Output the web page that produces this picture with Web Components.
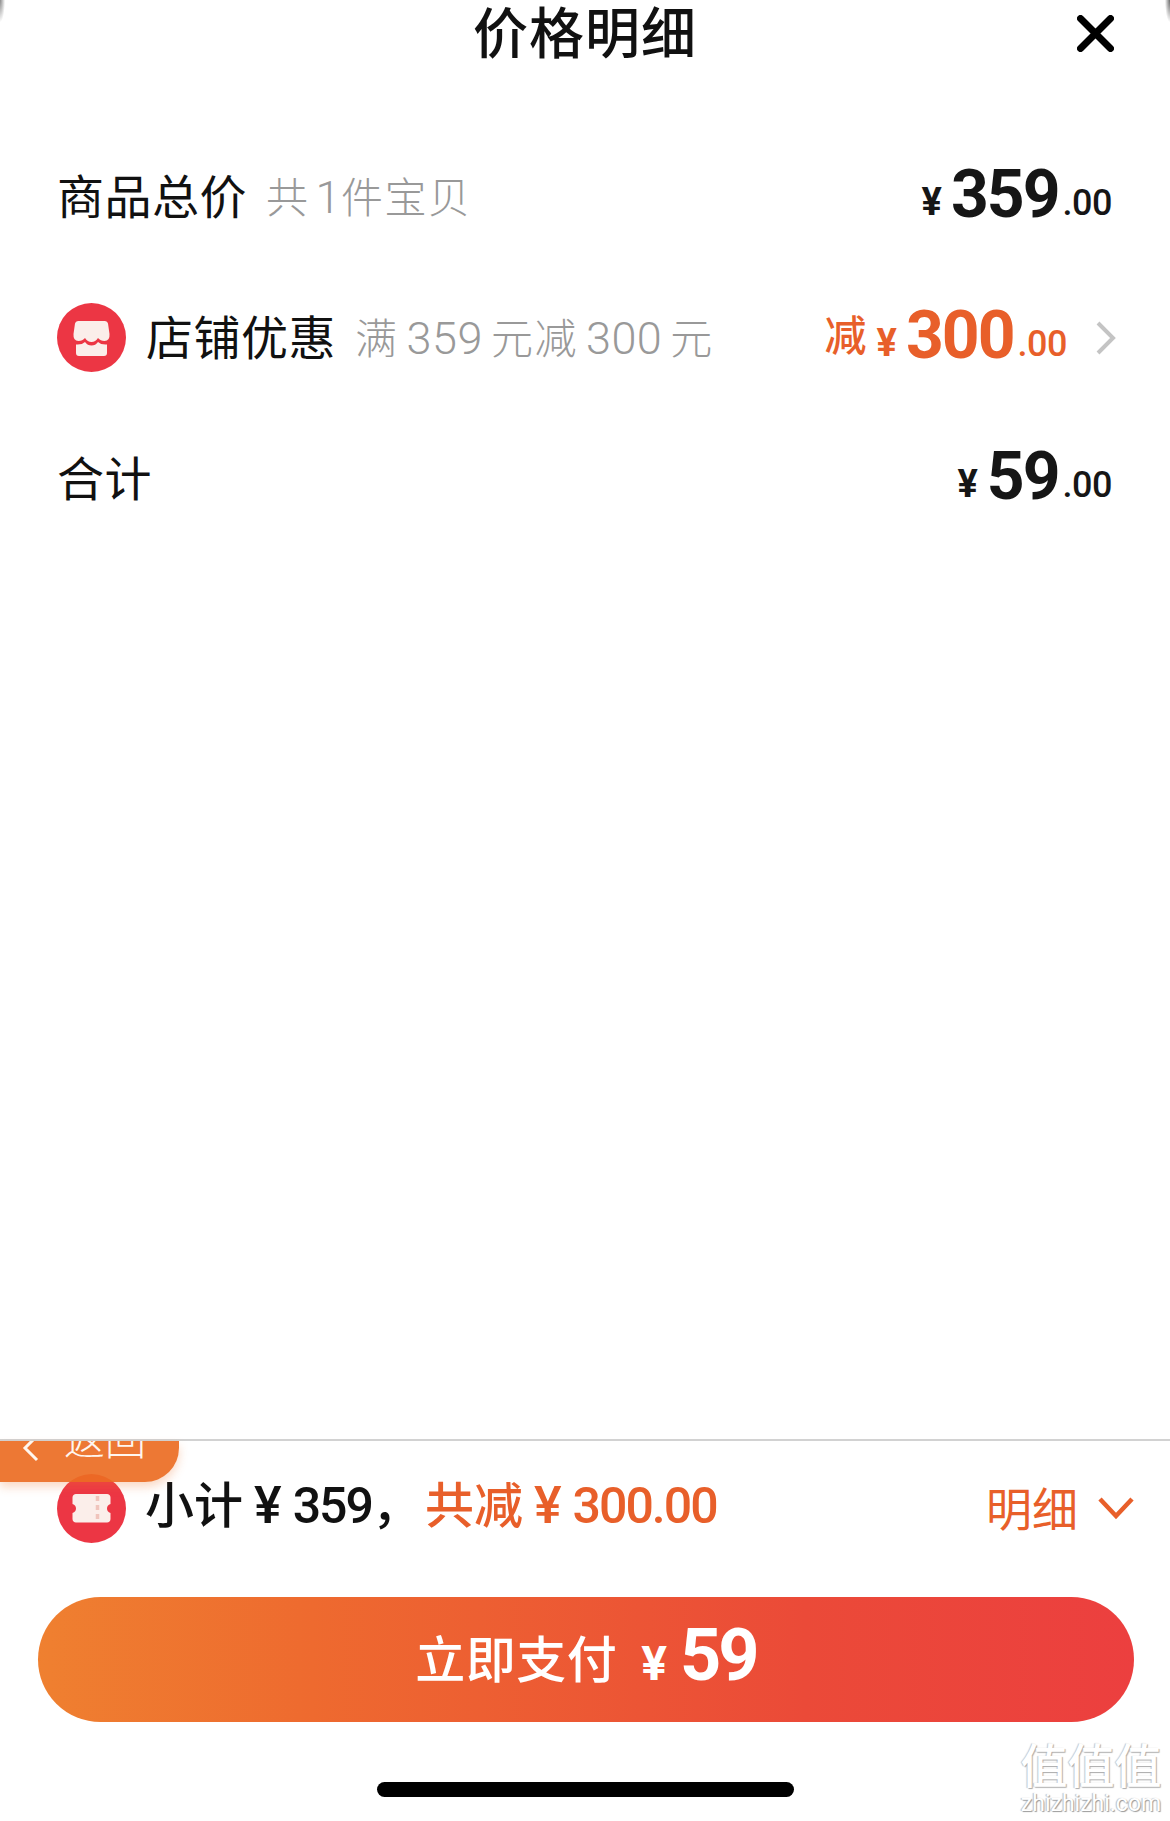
<!DOCTYPE html>
<html lang="zh"><head><meta charset="utf-8"><title>价格明细</title>
<style>
html,body{margin:0;padding:0;background:#fff}
body{width:1170px;height:1821px;overflow:hidden;font-family:"Noto Sans CJK SC","Noto Sans",sans-serif;color:#111}
</style></head><body>
<price-sheet>
  <sheet-header slot="header" title="价格明细"></sheet-header>
  <price-row slot="rows" label="商品总价" note="共 1 件宝贝">
    <price-amount whole="359"></price-amount>
  </price-row>
  <price-row slot="rows" label="店铺优惠" note="满 359 元减 300 元" icon="shop">
    <price-amount whole="300" prefix="减" tone="accent" chevron></price-amount>
  </price-row>
  <price-row slot="rows" label="合计">
    <price-amount whole="59"></price-amount>
  </price-row>
  <order-footer slot="footer"></order-footer>
</price-sheet>
<script>
const FONT_CJK='"Noto Sans CJK SC","Noto Sans",sans-serif';
const FONT_NUM='Roboto,"Noto Sans",sans-serif';
const ICONS={
 shop:`<svg viewBox="0 0 69 69" width="69" height="69"><circle cx="34.5" cy="34.5" r="34.5" fill="#EC3644"/><path fill="#fbeeea" d="M21 18H48Q50.5 18 51 20.500L52.500 31Q53 38 47.500 38Q43.500 38 41 35Q38.500 39 34.500 39Q30.500 39 28 35Q25.500 38 21.500 38Q16 38 16.500 31L18 20.500Q18.500 18 21 18Z"/><path fill="#fbeeea" d="M19 41.500Q25 42 28 39Q30.500 42.500 34.500 42.500Q38.500 42.500 41 39Q44 42 50 41.500V50Q50 53 47 53H22Q19 53 19 50Z"/></svg>`,
 ticket:`<svg viewBox="0 0 69 69" width="69" height="69"><circle cx="34.500" cy="34.500" r="34.500" fill="#EC3644"/><path fill="#fbeeea" d="M19 20h31c2 0 3.500 1.500 3.500 3.500v6.500c-2.400.8-3.500 2.400-3.500 4.500s1.100 3.700 3.500 4.500v6c0 2-1.500 3.500-3.500 3.500H19c-2 0-3.500-1.500-3.500-3.500v-6c2.400-.8 3.500-2.400 3.500-4.500s-1.100-3.700-3.500-4.500v-6.500c0-2 1.500-3.500 3.500-3.500z"/><path stroke="#f0c4bc" stroke-width="3.500" stroke-dasharray="5 4" d="M40.500 22v25"/></svg>`
};
function define(name,css,html){
  customElements.define(name,class extends HTMLElement{
    connectedCallback(){
      if(this.shadowRoot)return;
      const r=this.attachShadow({mode:'open'});
      r.innerHTML=`<style>${css}</style>`+(typeof html==='function'?html(this):html);
    }
  });
}
define('price-sheet',`
 :host{display:flex;flex-direction:column;position:relative;width:1170px;height:1821px;background:#fff;overflow:hidden}
 .rows{display:flex;flex-direction:column}
 .grow{flex:1}
`,`<slot name="header"></slot><div class="rows"><slot name="rows"></slot></div><div class="grow"></div><slot name="footer"></slot>`);

define('sheet-header',`
 :host{display:block;position:relative;height:126px;box-sizing:border-box;text-align:center}
 :host::before,:host::after{content:"";position:absolute;top:0;width:5px;height:22px}
 :host::before{left:0;background:radial-gradient(ellipse at 0 0,#8a8a8a,rgba(255,255,255,0) 72%)}
 :host::after{right:0;background:radial-gradient(ellipse at 100% 0,#6a6a6a,rgba(255,255,255,0) 72%)}
 h1{margin:0;font:500 55px/56px ${FONT_CJK};color:#111;letter-spacing:1px;padding-top:1px}
 svg{position:absolute;left:1077px;top:15px}
`,h=>`<h1>${h.getAttribute('title')}</h1>
 <svg width="37" height="37" viewBox="0 0 37 37"><path d="M3.500 3.500l30 30M33.500 3.500l-30 30" stroke="#000" stroke-width="7" stroke-linecap="round" fill="none"/></svg>`);

define('price-row',`
 :host{display:flex;align-items:center;height:141px;box-sizing:border-box;padding:0 58px 0 57px}
 .icon{flex:none;width:69px;height:69px;margin-right:20px}
 .label{font:400 47px/1 ${FONT_CJK};color:#111;white-space:nowrap;margin-bottom:6px;letter-spacing:.5px}
 .note{font:300 42px/1 ${FONT_CJK};color:#999;margin-left:19px;white-space:nowrap;letter-spacing:1.500px}
 .num{font-family:${FONT_NUM};font-size:45px;font-weight:300;padding:0 8px;letter-spacing:.5px}
 .num.one{padding:0 0 0 6px}
 .amount{margin-left:auto;display:flex;margin-bottom:4px}
`,h=>{
  const icon=h.getAttribute('icon');
  const note=h.getAttribute('note');
  return `${icon?`<span class="icon">${ICONS[icon]}</span>`:''}<span class="label">${h.getAttribute('label')}</span>${note?`<span class="note">${note.replace(/ (\d+) /g,(m,d)=>`<span class="num${d.length===1?' one':''}">${d}</span>`)}</span>`:''}<span class="amount"><slot></slot></span>`;
});

define('price-amount',`
 :host{display:inline-flex;align-items:baseline;white-space:nowrap;color:#161616;font-family:${FONT_NUM}}
 :host([tone=accent]){color:#E85F2A}
 .pre{font:500 42px/1 ${FONT_CJK};margin-right:10px;transform:translateY(-7px)}
 .yen{font-size:38px;font-weight:700;margin-right:9px;transform:translateY(-2px)}
 .whole{font-size:66px;font-weight:700;letter-spacing:-2px}
 .dec{font-size:36px;font-weight:500;letter-spacing:-.5px;margin-left:4px;transform:translateY(-2px)}
 .chev{align-self:center;margin:4px -4px 0 29px}
`,h=>`${h.hasAttribute('prefix')?`<span class="pre">${h.getAttribute('prefix')}</span>`:''}<span class="yen">¥</span><span class="whole">${h.getAttribute('whole')}</span><span class="dec">.00</span>${h.hasAttribute('chevron')?`<svg class="chev" width="20" height="34" viewBox="0 0 20 34"><path d="M2 2l15 15L2 32" fill="none" stroke="#c4c4c4" stroke-width="4"/></svg>`:''}`);

define('back-tab',`
 :host{position:absolute;left:0;top:0;width:179px;height:41px;background:rgba(235,108,35,.92);border-bottom-right-radius:34px;overflow:hidden;box-shadow:0 5px 10px rgba(238,119,51,.28);z-index:2}
 svg{position:absolute;left:20px;top:-8px}
 span{position:absolute;left:64px;top:-27px;font:300 41px/46px ${FONT_CJK};color:#fff6ef}
`,`<svg width="22" height="30" viewBox="0 0 22 30"><path d="M17 3L5 15l12 12" fill="none" stroke="#fff6ef" stroke-width="3"/></svg><span>返回</span>`);

define('order-footer',`
 :host{display:block;position:relative;border-top:2px solid #d2d2d2;box-sizing:border-box;height:382px}
 .sum{display:flex;align-items:center;height:134px;padding:0 36px 0 57px;box-sizing:border-box}
 .icon{flex:none;width:69px;height:69px;margin-right:19px}
 .t{font:500 49px/1 ${FONT_CJK};white-space:nowrap;margin-bottom:7px}
 .n{font-family:${FONT_NUM};font-weight:500;font-size:50px;letter-spacing:-2px}
 .y{font-family:${FONT_NUM};font-weight:500;font-size:52px;margin:0 11px}
 .acc{color:#E85F2A;margin-left:4px}
 .detail{margin-left:auto;display:flex;align-items:center;color:#E85F2A;font:400 46px/1 ${FONT_CJK}}
 .detail span{margin-bottom:5px}
 .detail svg{margin-left:20px}
`,`<back-tab></back-tab>
 <div class="sum">
  <span class="icon">${ICONS.ticket}</span>
  <span class="t">小计<span class="y">¥</span><span class="n">359</span>，</span>
  <span class="t acc">共减<span class="y">¥</span><span class="n">300.00</span></span>
  <span class="detail"><span>明细</span><svg width="36" height="24" viewBox="0 0 36 24"><path d="M2 3l16 17L34 3" fill="none" stroke="#E85F2A" stroke-width="4.500"/></svg></span>
 </div>
 <pay-button></pay-button>
 <home-bar></home-bar>
 <site-watermark></site-watermark>`);

define('pay-button',`
 :host{display:flex;align-items:center;justify-content:center;height:125px;margin:22px 36px 0 38px;border-radius:63px;background:linear-gradient(90deg,#EF8030,#EE6A2F 25%,#EB4A38 70%,#EC3F3F);color:#fff;font-family:${FONT_CJK};white-space:nowrap}
 .row{display:flex;align-items:baseline;padding-bottom:7px}
 .t{font:500 50px/1 ${FONT_CJK};letter-spacing:.5px;transform:translateY(-2px)}
 .y{font:700 48px/1 ${FONT_NUM};margin-left:24px}
 .n{font:700 72px/1 ${FONT_NUM};margin-left:13px;letter-spacing:-3px}
`,`<div class="row"><span class="t">立即支付</span><span class="y">¥</span><span class="n">59</span></div>`);

define('home-bar',`
 :host{display:block;width:417px;height:15px;margin:60px 0 0 377px;background:#000;border-radius:8px}
`,``);

define('site-watermark',`
 :host{position:absolute;left:1016px;top:298px;width:150px;text-align:center;color:#fff}
 .a{display:block;font:500 47px/48px ${FONT_CJK};color:#fff;text-shadow:1px 1px 1px #aaa,-1px 0 1px #c4c4c4;letter-spacing:0}
 .b{display:block;font:400 23px/24px ${FONT_NUM};color:#fff;text-shadow:1px 1px 1px #999,-1px 0 1px #bbb;margin-top:5px;white-space:nowrap}
`,`<span class="a">值值值</span><span class="b">zhizhizhi.com</span>`);
</script>
</body></html>
